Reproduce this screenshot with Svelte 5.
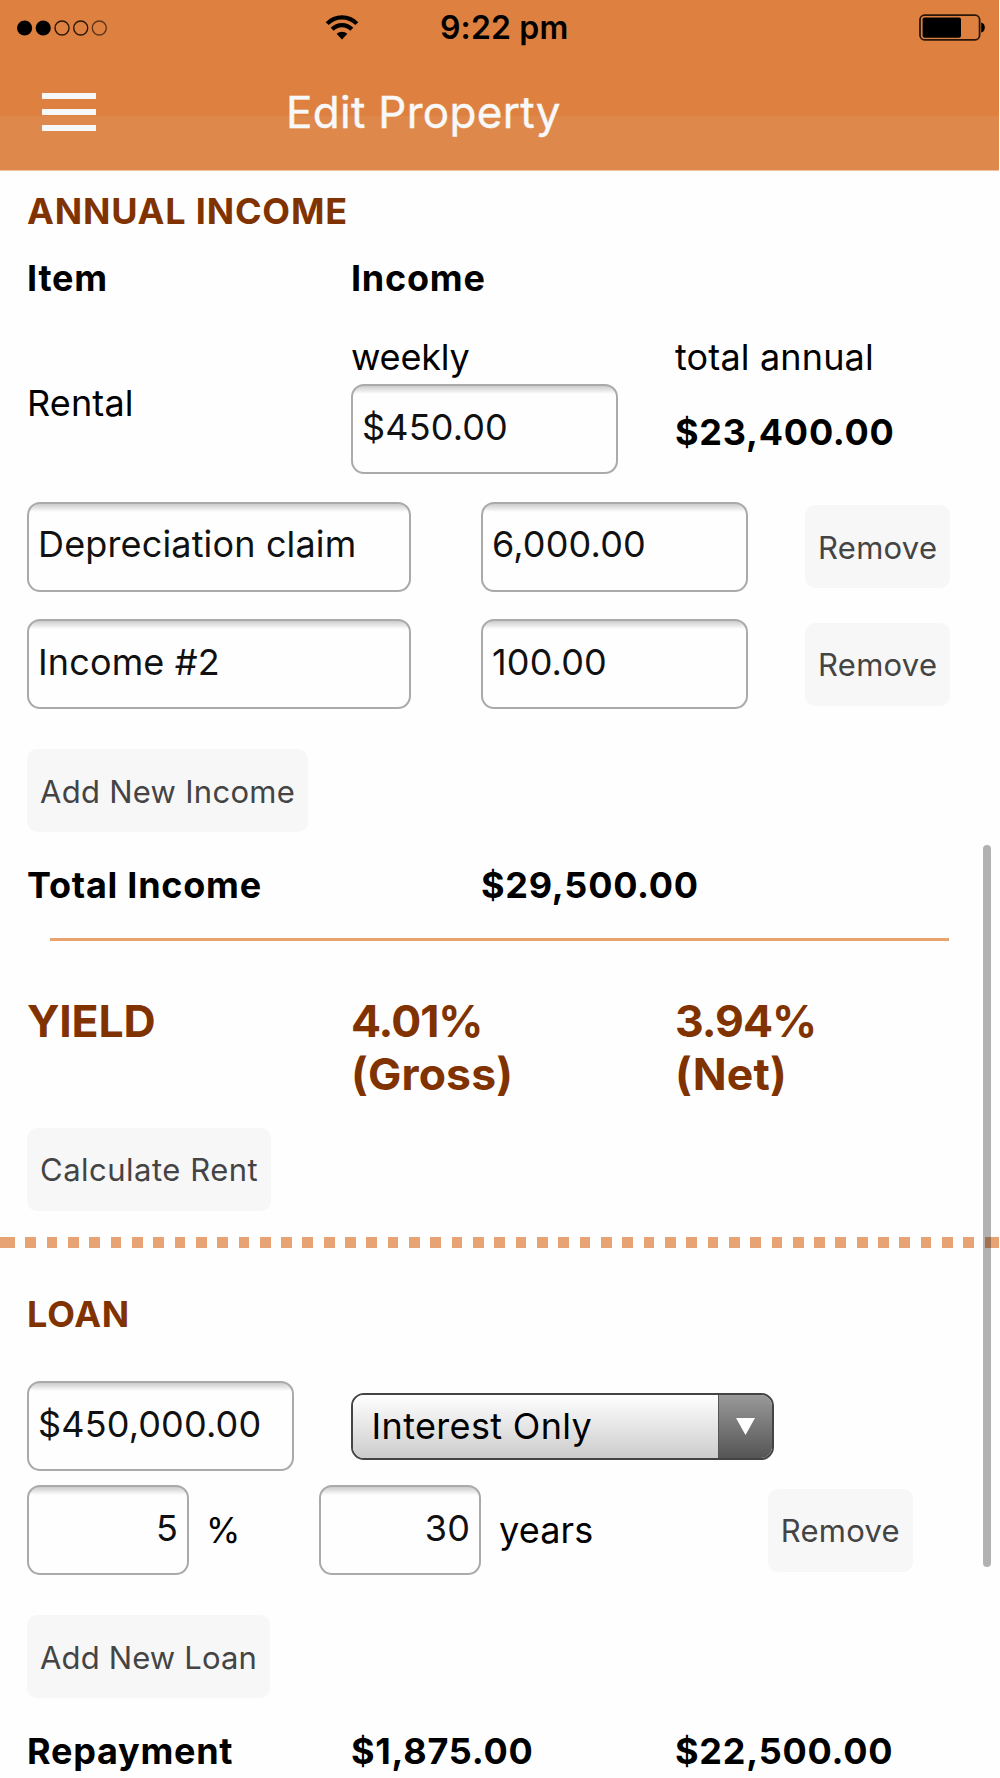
<script>
  let rental = "$450.00";
  let incomes = [
    { name: "Depreciation claim", amount: "6,000.00" },
    { name: "Income #2", amount: "100.00" },
  ];
  let loans = [
    { amount: "$450,000.00", type: "Interest Only", rate: "5", years: "30" },
  ];
  const loanTypes = ["Interest Only", "Principal & Interest"];

  function addIncome() {
    incomes = [...incomes, { name: `Income #${incomes.length + 1}`, amount: "0.00" }];
  }

  function removeIncome(i) {
    incomes = incomes.filter((_, n) => n !== i);
  }

  function addLoan() {
    loans = [...loans, { amount: "$0.00", type: loanTypes[0], rate: "5", years: "30" }];
  }

  function removeLoan(i) {
    loans = loans.filter((_, n) => n !== i);
  }
</script>

<div class="screen">
  <header>
    <div class="status">
      <svg class="signal" width="92" height="18" viewBox="0 0 92 18">
        <circle cx="8.6" cy="9" r="7.6" />
        <circle cx="27.2" cy="9" r="7.6" />
        <circle class="empty" cx="46" cy="9" r="7" />
        <circle class="empty" cx="64.7" cy="9" r="7" />
        <circle class="empty" cx="83.3" cy="9" r="7" opacity="0.7" />
      </svg>
      <svg class="wifi" width="34" height="26" viewBox="0 0 34 26">
        <path d="M2.2 8.600a20.500 20.500 0 0 1 29.600 0" />
        <path d="M7.2 14.200a13.600 13.600 0 0 1 19.600 0" />
        <path class="dot" d="M11.6 18.800a7.800 7.800 0 0 1 10.800 0L17 24.600z" />
      </svg>
      <span class="time">9:22 pm</span>
      <svg class="battery" width="68" height="28" viewBox="0 0 68 28">
        <rect class="case" x="1" y="1.2" width="59.6" height="24.6" rx="4.5" />
        <rect x="3.6" y="3.4" width="38.4" height="20.4" rx="2" />
        <path d="M62.2 8.4c2.4.6 3.6 2.6 3.6 5.1s-1.2 4.5-3.6 5.1z" />
      </svg>
    </div>
    <div class="nav">
      <button class="menu" aria-label="Menu">
        <i></i>
        <i></i>
        <i></i>
      </button>
      <h1>Edit Property</h1>
    </div>
  </header>

  <main>
    <h2>ANNUAL INCOME</h2>
    <div class="thirds head">
      <b>Item</b>
      <b>Income</b>
    </div>

    <div class="thirds rental">
      <span class="label">Rental</span>
      <div>
        <div class="weekly">weekly</div>
        <input class="money" bind:value={rental} />
      </div>
      <div>
        <div>total annual</div>
        <b class="annual">$23,400.00</b>
      </div>
    </div>

    {#each incomes as income, i}
      <div class="income">
        <input class="name" bind:value={income.name} />
        <input class="money" bind:value={income.amount} />
        <button class="btn" on:click={() => removeIncome(i)}>Remove</button>
      </div>
    {/each}

    <button class="btn add" on:click={addIncome}>Add New Income</button>

    <div class="income total">
      <b>Total Income</b>
      <b class="sum">$29,500.00</b>
    </div>

    <hr />

    <div class="thirds yield">
      <div class="title">YIELD</div>
      <div><span class="rate">4.01%</span><br />(Gross)</div>
      <div><span class="rate">3.94%</span><br />(Net)</div>
    </div>
    <button class="btn calc">Calculate Rent</button>

    <div class="dotted"></div>

    <h2 class="loan-title">LOAN</h2>
    {#each loans as loan, i}
      <div class="thirds loan">
        <input class="money" bind:value={loan.amount} />
        <div class="select">
          <select bind:value={loan.type}>
            {#each loanTypes as type}
              <option>{type}</option>
            {/each}
          </select>
          <div class="arrow">
            <svg width="20" height="17" viewBox="0 0 20 17">
              <path d="M0 0h19L9.5 17z" />
            </svg>
          </div>
        </div>
      </div>
      <div class="terms">
        <label><input class="short" bind:value={loan.rate} /><span class="percent">%</span></label>
        <label><input class="short" bind:value={loan.years} />years</label>
        <button class="btn" on:click={() => removeLoan(i)}>Remove</button>
      </div>
    {/each}

    <button class="btn add add-loan" on:click={addLoan}>Add New Loan</button>

    <div class="thirds repayment">
      <b>Repayment</b>
      <b>$1,875.00</b>
      <b>$22,500.00</b>
    </div>
  </main>

  <div class="scrollbar"></div>
</div>

<style>
  :global(body) {
    margin: 0;
    background: #fefefe;
  }

  .screen {
    position: relative;
    width: 1000px;
    height: 1778px;
    overflow: hidden;
    background: #fefefe;
    color: #000;
    font-family: Inter, "Liberation Sans", sans-serif;
    font-size: 36px;
    line-height: 44px;
    letter-spacing: 0.15px;
  }

  header {
    width: 999px;
    height: 171px;
    background: linear-gradient(#de8040 116.5px, #de894b 116.5px, #de894b 170px, #eec3a4 170px);
  }

  .status {
    display: flex;
    align-items: center;
    height: 55px;
    padding: 0 12px 0 16px;
    box-sizing: border-box;
  }

  .signal .empty {
    fill: none;
    stroke: #2a1708;
    stroke-width: 1.4;
  }

  .wifi {
    margin-left: 217px;
  }

  .wifi path {
    fill: none;
    stroke: #000;
    stroke-width: 4.2;
  }

  .wifi .dot {
    fill: #000;
    stroke: none;
  }

  .time {
    margin-left: 81px;
    font-size: 32px;
    font-weight: 600;
  }

  .battery {
    margin-left: auto;
  }

  .battery .case {
    fill: none;
    stroke: #2a1708;
    stroke-width: 1.8;
  }

  .nav {
    display: flex;
    align-items: center;
    height: 114px;
    padding-left: 42px;
  }

  .menu {
    display: flex;
    flex-direction: column;
    gap: 10px;
    width: 54px;
    padding: 0;
    border: none;
    background: none;
  }

  .menu i {
    height: 6px;
    background: #f8f8f8;
  }

  h1 {
    margin: 0 0 0 190px;
    color: #f8f8f8;
    font-size: 44px;
    font-weight: 400;
    letter-spacing: 0.3px;
    -webkit-text-stroke: 0.4px #f8f8f8;
  }

  main {
    display: flow-root;
    padding-left: 27px;
  }

  h2 {
    margin: 18px 0 0;
    color: #803300;
    font-size: 36px;
    font-weight: 700;
    line-height: 44px;
    letter-spacing: 0.8px;
  }

  b {
    font-weight: 700;
    letter-spacing: 0.75px;
  }

  .thirds {
    display: grid;
    grid-template-columns: 324px 324px 324px;
  }

  .head {
    margin-top: 23px;
  }

  .rental {
    margin-top: 35px;
  }

  .label {
    align-self: center;
    padding-bottom: 4px;
  }

  .weekly {
    letter-spacing: -0.2px;
  }

  input {
    height: 90px;
    margin: 0;
    padding: 0 9px 5px;
    box-sizing: border-box;
    border: 2px solid #aaa;
    border-radius: 13px;
    outline: none;
    background: linear-gradient(#ccc, #fefefe 8px);
    color: #111;
    font: inherit;
    letter-spacing: inherit;
  }

  .rental input {
    display: block;
    margin-top: 5px;
  }

  .money {
    width: 267px;
  }

  .name {
    width: 384px;
  }

  .short {
    width: 162px;
    text-align: right;
  }

  .annual {
    display: block;
    margin-top: 31px;
  }

  .income {
    display: grid;
    grid-template-columns: 454px 324px auto;
    align-items: center;
    justify-items: start;
    margin-top: 27.5px;
  }

  .btn {
    display: block;
    height: 83px;
    padding: 2px 13px 0;
    border: none;
    border-radius: 10px;
    background: #f7f7f7;
    color: #444;
    font-family: inherit;
    font-size: 31px;
    line-height: 44px;
    letter-spacing: 0.28px;
  }

  .add {
    margin-top: 40px;
  }

  .add-loan {
    letter-spacing: 0.15px;
  }

  .total {
    margin-top: 31px;
  }

  hr {
    width: 899px;
    height: 3px;
    margin: 31px 0 0 23px;
    border: none;
    background: #e9a36f;
  }

  .yield {
    margin-top: 53.5px;
    color: #803300;
    font-size: 44.5px;
    font-weight: 700;
    line-height: 53px;
  }

  .yield .title {
    letter-spacing: -0.2px;
  }

  .yield .rate {
    letter-spacing: -1px;
  }

  .calc {
    margin-top: 27px;
    letter-spacing: 0.5px;
  }

  .dotted {
    width: 999px;
    height: 11px;
    margin: 26.5px 0 0 -27px;
    background:
      linear-gradient(#e8a374, #e8a374) 0 0 / 4px 11px no-repeat,
      linear-gradient(#e8a374, #e8a374) 100% 0 / 4px 11px no-repeat,
      repeating-linear-gradient(90deg, #e8a374 0 10.7px, transparent 10.7px 21.32px) 4px 0 no-repeat;
  }

  .loan-title {
    margin-top: 44px;
  }

  .loan {
    align-items: center;
    margin-top: 45px;
  }

  .select {
    display: flex;
    width: 423px;
    height: 67px;
    box-sizing: border-box;
    border: 2px solid #444;
    border-radius: 13px;
    overflow: hidden;
  }

  select {
    flex: 1;
    padding: 0 18.5px;
    border: none;
    appearance: none;
    background: linear-gradient(#fff, #ccc);
    color: #000;
    font: inherit;
    letter-spacing: 0.35px;
  }

  .arrow {
    display: flex;
    align-items: center;
    justify-content: center;
    width: 53px;
    border-left: 1px solid #555;
    background: linear-gradient(#999, #555);
  }

  .arrow path {
    fill: #fff;
  }

  .terms {
    display: grid;
    grid-template-columns: 292px 448.7px auto;
    align-items: center;
    justify-items: start;
    margin-top: 14px;
  }

  label {
    display: flex;
    align-items: center;
    gap: 18px;
  }

  .percent {
    margin-left: -1px;
    font-size: 35px;
  }

  .repayment {
    margin-top: 31px;
  }

  .scrollbar {
    position: absolute;
    top: 845px;
    right: 9px;
    width: 8px;
    height: 722px;
    border-radius: 4px;
    background: rgba(0, 0, 0, 0.3);
  }
</style>
